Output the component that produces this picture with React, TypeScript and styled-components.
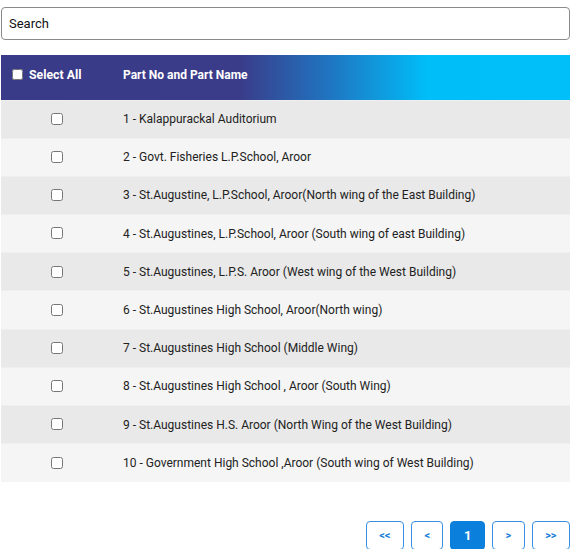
import React from "react";
import styled, { createGlobalStyle } from "styled-components";

const Global = createGlobalStyle`
  html, body { margin: 0; padding: 0; background: #ffffff; }
  body { font-family: Roboto, "Liberation Sans", Arial, sans-serif; color: #212529; }
  * { box-sizing: border-box; }
`;

const Page = styled.div`
  width: 569px;
  margin-left: 1px;
  padding-top: 7px;
  display: flex;
  flex-direction: column;
`;

const SearchInput = styled.input`
  width: 100%;
  height: 33px;
  border: 1px solid #8a8a8a;
  border-radius: 4px;
  padding: 0 7px;
  font-family: Roboto, "Liberation Sans", Arial, sans-serif;
  font-size: 13px;
  color: #111;
  outline: none;
  &::placeholder { color: #111; opacity: 1; }
`;

const Table = styled.table`
  margin-top: 15px;
  width: 100%;
  border-collapse: collapse;
  font-size: 12px;
`;

const HeadRow = styled.tr`
  background: linear-gradient(to right, #3a3b88 0%, #3a3c89 42%, #1f76c2 58%, #00bef8 75%, #00bff9 100%);
`;

const Th = styled.th<{ $w?: number }>`
  height: 45px;
  padding: 0 0 5px 10px;
  text-align: left;
  color: #ffffff;
  font-weight: 700;
  font-size: 12px;
  white-space: nowrap;
  width: ${(p) => (p.$w ? `${p.$w}px` : "auto")};
`;

const HeadLabel = styled.label`
  display: flex;
  align-items: center;
  gap: 6px;
  font-size: 12.3px;
  input { margin: 0 0 0 1px; width: 11px; height: 11px; }
`;

const Row = styled.tr<{ $odd: boolean }>`
  background: ${(p) => (p.$odd ? "#e9e9e9" : "#f5f5f5")};
  border-top: 1px solid #efefef;
`;

const CheckCell = styled.td`
  height: 38.2px;
  text-align: center;
  padding: 0 0 2px 0;
  input { margin: 0; width: 12px; height: 12px; vertical-align: middle; }
`;

const NameCell = styled.td`
  padding: 0 0 0 10px;
  color: #222;
`;

const Pager = styled.div`
  margin-top: 39px;
  display: flex;
  justify-content: flex-end;
  gap: 7px;
`;

const PageBtn = styled.button<{ $active?: boolean }>`
  height: 29px;
  padding: 0 12.5px;
  border: 1px solid ${(p) => (p.$active ? "#0a7fdb" : "#3a90e0")};
  border-radius: 4px;
  background: ${(p) => (p.$active ? "#0a7fdb" : "#ffffff")};
  color: ${(p) => (p.$active ? "#ffffff" : "#1a7fd8")};
  font-family: Roboto, "Liberation Sans", Arial, sans-serif;
  font-size: ${(p) => (p.$active ? "13px" : "11px")};
  font-weight: 700;
  cursor: pointer;
`;

const rows = [
  "1 - Kalappurackal Auditorium",
  "2 - Govt. Fisheries L.P.School, Aroor",
  "3 - St.Augustine, L.P.School, Aroor(North wing of the East Building)",
  "4 - St.Augustines, L.P.School, Aroor (South wing of east Building)",
  "5 - St.Augustines, L.P.S. Aroor (West wing of the West Building)",
  "6 - St.Augustines High School, Aroor(North wing)",
  "7 - St.Augustines High School (Middle Wing)",
  "8 - St.Augustines High School , Aroor (South Wing)",
  "9 - St.Augustines H.S. Aroor (North Wing of the West Building)",
  "10 - Government High School ,Aroor (South wing of West Building)",
];

export default function App() {
  return (
    <>
      <Global />
      <Page>
        <SearchInput placeholder="Search" />
        <Table>
          <thead>
            <HeadRow>
              <Th $w={112}>
                <HeadLabel>
                  <input type="checkbox" />
                  Select All
                </HeadLabel>
              </Th>
              <Th>Part No and Part Name</Th>
            </HeadRow>
          </thead>
          <tbody>
            {rows.map((r, i) => (
              <Row key={r} $odd={i % 2 === 0}>
                <CheckCell>
                  <input type="checkbox" />
                </CheckCell>
                <NameCell>{r}</NameCell>
              </Row>
            ))}
          </tbody>
        </Table>
        <Pager>
          <PageBtn>&lt;&lt;</PageBtn>
          <PageBtn>&lt;</PageBtn>
          <PageBtn $active>1</PageBtn>
          <PageBtn>&gt;</PageBtn>
          <PageBtn>&gt;&gt;</PageBtn>
        </Pager>
      </Page>
    </>
  );
}
